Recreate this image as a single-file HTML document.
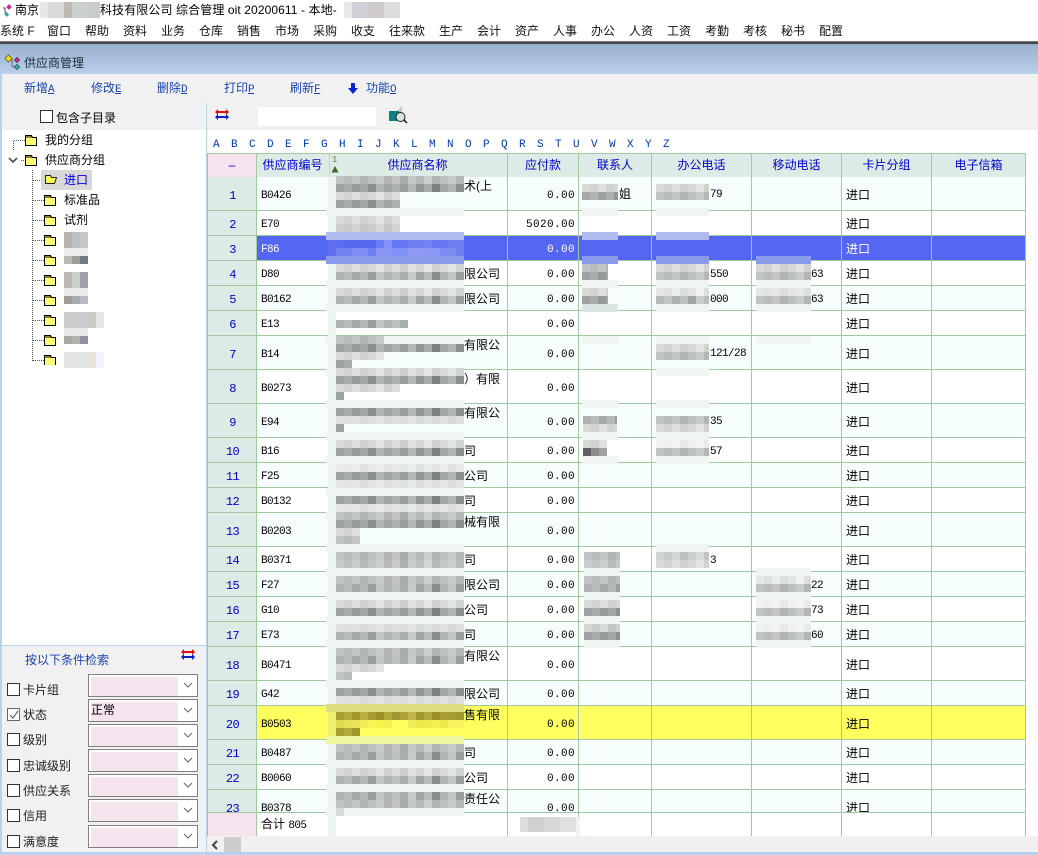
<!DOCTYPE html>
<html lang="zh"><head><meta charset="utf-8"><title>供应商管理</title>
<style>
:root{
--v:linear-gradient(90deg,#f0f2f0 0 8px,#eef0ee 0 16px,#f2f4f2 0 24px,#e8eae8 0 32px,#eef0ee 0 40px,#f4f4f4 0 48px,#e8ece8 0 56px,#f0f0f0 0 64px,#eaeeea 0 72px,#f4f6f4 0 80px,#e6eae8 0 88px,#f0f2f0 0 96px,#eaecea 0 104px,#f2f4f2 0 112px,#e6e8e6 0 120px,#eef0ee 0 128px);
--t:linear-gradient(90deg,#d8dad8 0 8px,#d2d4d2 0 16px,#dee0de 0 24px,#cfd2d0 0 32px,#d6d8d6 0 40px,#e2e4e2 0 48px,#d0d2d0 0 56px,#dcdedc 0 64px,#cdd0ce 0 72px,#e0e2e0 0 80px,#d4d6d4 0 88px,#e4e6e4 0 96px,#cfd2d0 0 104px,#dadcda 0 112px,#e2e4e2 0 120px,#d0d4d2 0 128px);
--m:linear-gradient(90deg,#c0c4c2 0 8px,#b8bcba 0 16px,#c4c6c4 0 24px,#b0b4b2 0 32px,#bcc0be 0 40px,#c8cac8 0 48px,#b4b6b4 0 56px,#c2c4c2 0 64px,#a8acaa 0 72px,#c6c8c6 0 80px,#b8bab8 0 88px,#ccd0ce 0 96px,#b0b4b2 0 104px,#c0c2c0 0 112px,#c8cac8 0 120px,#b4b8b6 0 128px);
--d:linear-gradient(90deg,#9ea2a0 0 8px,#a8acaa 0 16px,#969a98 0 24px,#a4a8a6 0 32px,#8c908e 0 40px,#b0b4b2 0 48px,#a0a4a2 0 56px,#acb0ae 0 64px,#9a9e9c 0 72px,#b4b8b6 0 80px,#929694 0 88px,#a8acaa 0 96px,#7c807e 0 104px,#a2a6a4 0 112px,#b0b4b2 0 120px,#8c908e 0 128px);
--by:linear-gradient(90deg,#a8a030 0 8px,#b4ac3c 0 16px,#a09828 0 24px,#b8b040 0 32px,#a49c30 0 40px,#988f28 0 48px,#b0a838 0 56px,#a09830 0 64px,#aca438 0 72px,#c0b848 0 80px,#a09830 0 88px,#b0a83c 0 96px,#988f28 0 104px,#a8a034 0 112px,#a49c30 0 120px,#a09830 0 128px);
--ly:linear-gradient(90deg,#e0dc50 0 8px,#e4e058 0 16px,#e8e45c 0 24px,#f0ec58 0 32px,#f8f458 0 40px,#f6f24c 0 48px,#f4f050 0 56px,#ffff60 0 72px,#f0ec58 0 80px,#ece84c 0 88px,#f0ec50 0 96px,#f4f054 0 104px,#ece84c 0 112px,#f6f260 0 128px);
--bb:linear-gradient(90deg,#5a6cf0 0 8px,#5668f0 0 40px,#6a7cf4 0 48px,#8492f8 0 56px,#6676f2 0 72px,#6e7ef2 0 88px,#7482f4 0 96px,#6676f2 0 112px,#7080f2 0 128px);
--bc:linear-gradient(90deg,#7282ee 0 16px,#7e8ef4 0 32px,#6e7eee 0 40px,#8a96f6 0 56px,#8090f4 0 72px,#8e9af4 0 88px,#8c98f6 0 104px,#7e8cf2 0 120px,#7080ee 0 128px);
}
html,body{margin:0;padding:0;background:#fff}
#p{position:relative;width:1038px;height:855px;overflow:hidden;background:#fff;font:12px/16px "Liberation Sans","Noto Sans CJK SC",sans-serif;color:#000}
#p div,#p span.a{position:absolute}
.t{white-space:nowrap;line-height:16px}
.mn{position:absolute;top:23px;white-space:nowrap;color:#111}
.tb{position:absolute;top:80px;color:#1a44b0;white-space:nowrap}
.tb u{font:11px "Liberation Mono",monospace;letter-spacing:-.6px}
.az{position:absolute;top:137px;font:11px/16px "Liberation Mono",monospace;color:#0038b0}
.r{left:207px;width:818px;border-bottom:1px solid #a3c9a3;background:#f6fffd}
.w{background:#fff}
.r>.i,.r>.k,.r>.m,.r>.g{top:0;bottom:0;display:flex;align-items:center;white-space:nowrap}
.r>.i{left:1px;width:49px;background:#dcebe5;justify-content:center;color:#0000cc;font:12px "Liberation Mono",monospace;letter-spacing:-.6px;padding-top:4px;box-sizing:border-box}
.r>.k{left:54px;font:11px "Liberation Mono",monospace;letter-spacing:-.6px;padding-top:4px;box-sizing:border-box}
.r>.m{right:450px;font:11px "Liberation Mono",monospace;letter-spacing:.4px;padding-top:4px;box-sizing:border-box}
.r>.g{left:639px;padding-top:2px;box-sizing:border-box}
.hd{top:154px;height:23px;background:#dcebe5;color:#0000cc;text-align:center;line-height:23px}
.vl{top:153px;height:683px;width:1px;background:#a3c9a3}
.s,.l{height:8px}
.s{left:326px;width:138px;background:#eff6f2}
.ss{height:8px;background:#eff6f2}
.l{left:336px;width:128px}
.V{background:var(--v)}.T{background:var(--t)}.M{background:var(--m)}.D{background:var(--d)}
.x{left:464px;white-space:nowrap;line-height:16px}
.sm{font:11px/16px "Liberation Mono",monospace;letter-spacing:-.6px;margin-top:1px}
.cb{left:7px;width:11px;height:11px;border:1px solid #333;background:#fff}
.lb{left:23px;white-space:nowrap;color:#222}
.sel{left:88px;width:108px;height:21px;border:1px solid #808080;background:#fff}
.sel>div{left:2px;top:2px;width:87px;height:19px;background:#f5e3ee}
.sel svg{position:absolute;left:94px;top:7px}
</style></head><body><div id="p">

<!-- title -->
<svg style="position:absolute;left:2px;top:4px" width="11" height="13" viewBox="0 0 11 13"><path d="M1 4h2v4l2 1" fill="none" stroke="#555"/><rect x="5" y="1" width="4" height="4" fill="#c03090" transform="rotate(45 7 3)"/><rect x="3" y="9" width="4" height="3" fill="#30a0a0" transform="rotate(45 5 10)"/></svg>
<div class="t" style="left:15px;top:2px">南京</div>
<div style="left:40px;top:2px;width:60px;height:16px;background:linear-gradient(90deg,#e6e8e6 0 8px,#d8dad8 0 24px,#c0b8b4 0 32px,#ccd0ce 0 48px,#c8cccc 0 60px)"></div>
<div class="t" style="left:100px;top:2px;letter-spacing:.1px">科技有限公司 综合管理 oit 20200611 - 本地-</div>
<div style="left:344px;top:2px;width:56px;height:16px;background:linear-gradient(90deg,#e8e8ea 0 8px,#d0d0d8 0 24px,#d0cccc 0 40px,#dcdcdc 0 56px)"></div>

<span class="mn" style="left:0">系统 F</span><span class="mn" style="left:47px">窗口</span><span class="mn" style="left:85px">帮助</span><span class="mn" style="left:123px">资料</span><span class="mn" style="left:161px">业务</span><span class="mn" style="left:199px">仓库</span><span class="mn" style="left:237px">销售</span><span class="mn" style="left:275px">市场</span><span class="mn" style="left:313px">采购</span><span class="mn" style="left:351px">收支</span><span class="mn" style="left:389px">往来款</span><span class="mn" style="left:439px">生产</span><span class="mn" style="left:477px">会计</span><span class="mn" style="left:515px">资产</span><span class="mn" style="left:553px">人事</span><span class="mn" style="left:591px">办公</span><span class="mn" style="left:629px">人资</span><span class="mn" style="left:667px">工资</span><span class="mn" style="left:705px">考勤</span><span class="mn" style="left:743px">考核</span><span class="mn" style="left:781px">秘书</span><span class="mn" style="left:819px">配置</span>

<div style="left:0;top:41px;width:1038px;height:3px;background:linear-gradient(#999,#333 60%,#555)"></div>
<div style="left:0;top:44px;width:1038px;height:30px;background:linear-gradient(#98b0cc,#b9d0ea)"></div>
<svg style="position:absolute;left:4px;top:54px" width="17" height="17" viewBox="0 0 17 17"><path d="M6 5l2 1v6l3 1" fill="none" stroke="#666"/><rect x="2" y="2" width="5" height="5" fill="#f2e000" stroke="#333" stroke-width=".6" transform="rotate(45 4.5 4.5)"/><rect x="11" y="4" width="4" height="4" fill="#c03090" stroke="#333" stroke-width=".5" transform="rotate(45 13 6)"/><rect x="11" y="11" width="4" height="4" fill="#30a8a8" stroke="#333" stroke-width=".5" transform="rotate(45 13 13)"/></svg>
<div class="t" style="left:24px;top:55px;color:#1c2b3c">供应商管理</div>

<!-- toolbar area -->
<div style="left:0;top:74px;width:1038px;height:56px;background:#f1f1f1"></div>
<div style="left:0;top:74px;width:2px;height:781px;background:#b8d2ee"></div>
<div style="left:206px;top:103px;width:1px;height:749px;background:#b8d2ee"></div>
<span class="tb" style="left:24px">新增<u>A</u></span><span class="tb" style="left:91px">修改<u>E</u></span><span class="tb" style="left:157px">删除<u>D</u></span><span class="tb" style="left:224px">打印<u>P</u></span><span class="tb" style="left:290px">刷新<u>F</u></span>
<svg style="position:absolute;left:348px;top:83px" width="10" height="11" viewBox="0 0 10 11"><path d="M3 0h4v5h3l-5 6-5-6h3z" fill="#0a20d8"/></svg>
<span class="tb" style="left:366px">功能<u>O</u></span>

<div style="left:40px;top:110px;width:11px;height:11px;border:1px solid #333;background:#fff"></div>
<div class="t" style="left:56px;top:110px">包含子目录</div>

<svg style="position:absolute;left:215px;top:109px" width="14" height="12" viewBox="0 0 14 12"><path d="M2 3h10" stroke="#e01010" stroke-width="2"/><path d="M3 0v6L0 3zM11 0v6l3-3z" fill="#e01010"/><path d="M2 8h10" stroke="#1020c0" stroke-width="2"/><path d="M3 5v6L0 8zM11 5v6l3-3z" fill="#1020c0"/></svg>
<div style="left:258px;top:107px;width:118px;height:19px;background:#fff"></div>
<svg style="position:absolute;left:389px;top:106px" width="19" height="20" viewBox="0 0 19 20"><path d="M8 5l5-5v8z" fill="#c4c4c4"/><rect x="0" y="5" width="10" height="10" fill="#0d8080"/><circle cx="11.500" cy="11" r="4.500" fill="#d8e4e4" stroke="#222"/><path d="M15 14l3 3" stroke="#111" stroke-width="1.500"/></svg>

<!-- tree -->
<div style="left:2px;top:130px;width:204px;height:515px;background:#fff"></div>
<svg style="position:absolute;left:0;top:130px" width="110" height="235" viewBox="0 0 110 235">
<defs><g id="f"><path d="M.5 11.500V1.500h6l1 2h4v8z" fill="#ffff70" stroke="#000"/><path d="M1 3h6" stroke="#000"/></g></defs>
<g stroke="#555" stroke-dasharray="1 1" fill="none"><path d="M13.500 20V10M14 10.500h11M21 30.500h4M32.500 40v191M33 50.500h11M33 70.500h11M33 90.500h11M33 110.500h11M33 130.500h11M33 150.500h11M33 170.500h11M33 190.500h11M33 210.500h11M33 230.500h11"/></g>
<path d="M9 28l4 4 4-4" fill="none" stroke="#555" stroke-width="1.800"/>
<rect x="41" y="40" width="51" height="20" fill="#d8d8d8"/>
<use href="#f" x="25" y="4"/><use href="#f" x="25" y="24"/>
<path d="M45.500 45.500h5l1 2h5l-2 6h-9z" fill="#ffff50" stroke="#222"/>
<use href="#f" x="44" y="64"/><use href="#f" x="44" y="84"/><use href="#f" x="44" y="104"/><use href="#f" x="44" y="124"/><use href="#f" x="44" y="144"/><use href="#f" x="44" y="164"/><use href="#f" x="44" y="184"/><use href="#f" x="44" y="204"/><use href="#f" x="44" y="224"/>
</svg>
<div class="t" style="left:45px;top:132px">我的分组</div>
<div class="t" style="left:45px;top:152px">供应商分组</div>
<div class="t" style="left:64px;top:172px;color:#0000e0">进口</div>
<div class="t" style="left:64px;top:192px">标准品</div>
<div class="t" style="left:64px;top:212px">试剂</div>
<div style="left:64px;top:232px;width:24px;height:16px;background:linear-gradient(90deg,#bab4ae 0 8px,#bcc0c4 0 16px,#c8c8c8 0 24px)"></div>
<div style="left:64px;top:248px;width:24px;height:8px;background:#ececec"></div>
<div style="left:64px;top:256px;width:24px;height:8px;background:linear-gradient(90deg,#bcbab6 0 8px,#9c9c9a 0 16px,#747880 0 24px)"></div>
<div style="left:64px;top:272px;width:24px;height:16px;background:linear-gradient(90deg,#bcb8b8 0 8px,#ccd0ca 0 16px,#a0a0a8 0 24px)"></div>
<div style="left:64px;top:288px;width:24px;height:8px;background:#eaeaea"></div>
<div style="left:64px;top:296px;width:24px;height:8px;background:linear-gradient(90deg,#a09c98 0 8px,#a8acb0 0 16px,#bcbcc0 0 24px)"></div>
<div style="left:64px;top:312px;width:40px;height:16px;background:linear-gradient(90deg,#ccc 0 24px,#ccc8c4 0 32px,#e4e6ea 0 40px)"></div>
<div style="left:64px;top:328px;width:24px;height:8px;background:#e8e8e8"></div>
<div style="left:64px;top:336px;width:24px;height:8px;background:linear-gradient(90deg,#a8a8a4 0 8px,#b0b4ae 0 16px,#9090a0 0 24px)"></div>
<div style="left:64px;top:352px;width:40px;height:16px;background:linear-gradient(90deg,#e4e4e4 0 24px,#e8e4dc 0 32px,#f2f6fc 0 40px)"></div>

<!-- search panel -->
<div style="left:2px;top:645px;width:204px;height:1px;background:#b8d2ee"></div>
<div style="left:2px;top:646px;width:204px;height:206px;background:#f1f1f1"></div>
<div class="t" style="left:25px;top:652px;color:#1a44b0">按以下条件检索</div>
<svg style="position:absolute;left:181px;top:649px" width="14" height="12" viewBox="0 0 14 12"><path d="M2 3h10" stroke="#e01010" stroke-width="2"/><path d="M3 0v6L0 3zM11 0v6l3-3z" fill="#e01010"/><path d="M2 8h10" stroke="#1020c0" stroke-width="2"/><path d="M3 5v6L0 8zM11 5v6l3-3z" fill="#1020c0"/></svg>
<div class="cb" style="top:683px"></div><div class="lb" style="top:682px">卡片组</div>
<div class="cb" style="top:708px;border-color:#666"></div><svg style="position:absolute;left:9px;top:710px" width="10" height="10" viewBox="0 0 10 10"><path d="M1 5l3 3 5-7" fill="none" stroke="#666" stroke-width="1.200"/></svg><div class="lb" style="top:707px">状态</div>
<div class="cb" style="top:733px"></div><div class="lb" style="top:732px">级别</div>
<div class="cb" style="top:759px"></div><div class="lb" style="top:758px">忠诚级别</div>
<div class="cb" style="top:784px"></div><div class="lb" style="top:783px">供应关系</div>
<div class="cb" style="top:809px"></div><div class="lb" style="top:808px">信用</div>
<div class="cb" style="top:835px"></div><div class="lb" style="top:834px">满意度</div>

<div class="sel" style="top:674px"><div></div><svg width="10" height="6" viewBox="0 0 10 6"><path d="M1 1l4 4 4-4" fill="none" stroke="#666"/></svg></div>
<div class="sel" style="top:699px"><div></div><svg width="10" height="6" viewBox="0 0 10 6"><path d="M1 1l4 4 4-4" fill="none" stroke="#666"/></svg></div>
<div class="t" style="left:91px;top:702px">正常</div>
<div class="sel" style="top:724px"><div></div><svg width="10" height="6" viewBox="0 0 10 6"><path d="M1 1l4 4 4-4" fill="none" stroke="#666"/></svg></div>
<div class="sel" style="top:749px"><div></div><svg width="10" height="6" viewBox="0 0 10 6"><path d="M1 1l4 4 4-4" fill="none" stroke="#666"/></svg></div>
<div class="sel" style="top:774px"><div></div><svg width="10" height="6" viewBox="0 0 10 6"><path d="M1 1l4 4 4-4" fill="none" stroke="#666"/></svg></div>
<div class="sel" style="top:799px"><div></div><svg width="10" height="6" viewBox="0 0 10 6"><path d="M1 1l4 4 4-4" fill="none" stroke="#666"/></svg></div>
<div class="sel" style="top:825px"><div></div><svg width="10" height="6" viewBox="0 0 10 6"><path d="M1 1l4 4 4-4" fill="none" stroke="#666"/></svg></div>

<!-- alphabet -->
<span class="az" style="left:213px">A</span><span class="az" style="left:231px">B</span><span class="az" style="left:249px">C</span><span class="az" style="left:267px">D</span><span class="az" style="left:285px">E</span><span class="az" style="left:303px">F</span><span class="az" style="left:321px">G</span><span class="az" style="left:339px">H</span><span class="az" style="left:357px">I</span><span class="az" style="left:375px">J</span><span class="az" style="left:393px">K</span><span class="az" style="left:411px">L</span><span class="az" style="left:429px">M</span><span class="az" style="left:447px">N</span><span class="az" style="left:465px">O</span><span class="az" style="left:483px">P</span><span class="az" style="left:501px">Q</span><span class="az" style="left:519px">R</span><span class="az" style="left:537px">S</span><span class="az" style="left:555px">T</span><span class="az" style="left:573px">U</span><span class="az" style="left:591px">V</span><span class="az" style="left:609px">W</span><span class="az" style="left:627px">X</span><span class="az" style="left:645px">Y</span><span class="az" style="left:663px">Z</span>

<!-- grid header -->
<div style="left:207px;top:153px;width:819px;height:1px;background:#a3c9a3"></div>
<div class="hd" style="left:208px;width:48px;background:#f5e3ee">–</div>
<div class="hd" style="left:257px;width:71px">供应商编号</div>
<div class="hd" style="left:328px;width:179px">供应商名称</div>
<div class="hd" style="left:508px;width:70px">应付款</div>
<div class="hd" style="left:579px;width:72px">联系人</div>
<div class="hd" style="left:652px;width:99px">办公电话</div>
<div class="hd" style="left:752px;width:89px">移动电话</div>
<div class="hd" style="left:842px;width:89px">卡片分组</div>
<div class="hd" style="left:932px;width:93px">电子信箱</div>
<div style="left:329px;top:154px;width:1px;height:23px;background:#c5d8c5"></div>
<div style="left:332px;top:155px;font:9px/10px 'Liberation Mono',monospace;color:#8a7a20">1</div>
<svg style="position:absolute;left:331px;top:166px" width="8" height="7" viewBox="0 0 8 7"><path d="M4 0l3.500 6.500H.5z" fill="#3d6a2a"/></svg>

<!-- rows -->
<div class="r" style="top:177px;height:33px"><div class="i">1</div><div class="k">B0426</div><div class="m">0.00</div><div class="g">进口</div></div>
<div class="r w" style="top:211px;height:24px"><div class="i">2</div><div class="k">E70</div><div class="m">5020.00</div><div class="g">进口</div></div>
<div class="r" style="top:236px;height:24px;background:#5566f2;color:#fff"><div class="i">3</div><div class="k">F86</div><div class="m">0.00</div><div class="g">进口</div></div>
<div class="r w" style="top:261px;height:24px"><div class="i">4</div><div class="k">D80</div><div class="m">0.00</div><div class="g">进口</div></div>
<div class="r" style="top:286px;height:24px"><div class="i">5</div><div class="k">B0162</div><div class="m">0.00</div><div class="g">进口</div></div>
<div class="r w" style="top:311px;height:24px"><div class="i">6</div><div class="k">E13</div><div class="m">0.00</div><div class="g">进口</div></div>
<div class="r" style="top:336px;height:33px"><div class="i">7</div><div class="k">B14</div><div class="m">0.00</div><div class="g">进口</div></div>
<div class="r w" style="top:370px;height:33px"><div class="i">8</div><div class="k">B0273</div><div class="m">0.00</div><div class="g">进口</div></div>
<div class="r" style="top:404px;height:33px"><div class="i">9</div><div class="k">E94</div><div class="m">0.00</div><div class="g">进口</div></div>
<div class="r w" style="top:438px;height:24px"><div class="i">10</div><div class="k">B16</div><div class="m">0.00</div><div class="g">进口</div></div>
<div class="r" style="top:463px;height:24px"><div class="i">11</div><div class="k">F25</div><div class="m">0.00</div><div class="g">进口</div></div>
<div class="r w" style="top:488px;height:24px"><div class="i">12</div><div class="k">B0132</div><div class="m">0.00</div><div class="g">进口</div></div>
<div class="r" style="top:513px;height:33px"><div class="i">13</div><div class="k">B0203</div><div class="m">0.00</div><div class="g">进口</div></div>
<div class="r w" style="top:547px;height:24px"><div class="i">14</div><div class="k">B0371</div><div class="m">0.00</div><div class="g">进口</div></div>
<div class="r" style="top:572px;height:24px"><div class="i">15</div><div class="k">F27</div><div class="m">0.00</div><div class="g">进口</div></div>
<div class="r w" style="top:597px;height:24px"><div class="i">16</div><div class="k">G10</div><div class="m">0.00</div><div class="g">进口</div></div>
<div class="r" style="top:622px;height:24px"><div class="i">17</div><div class="k">E73</div><div class="m">0.00</div><div class="g">进口</div></div>
<div class="r w" style="top:647px;height:33px"><div class="i">18</div><div class="k">B0471</div><div class="m">0.00</div><div class="g">进口</div></div>
<div class="r" style="top:681px;height:24px"><div class="i">19</div><div class="k">G42</div><div class="m">0.00</div><div class="g">进口</div></div>
<div class="r" style="top:706px;height:33px;background:#ffff60"><div class="i">20</div><div class="k">B0503</div><div class="m">0.00</div><div class="g">进口</div></div>
<div class="r" style="top:740px;height:24px"><div class="i">21</div><div class="k">B0487</div><div class="m">0.00</div><div class="g">进口</div></div>
<div class="r w" style="top:765px;height:24px"><div class="i">22</div><div class="k">B0060</div><div class="m">0.00</div><div class="g">进口</div></div>
<div class="r" style="top:790px;height:33px"><div class="i">23</div><div class="k">B0378</div><div class="m">0.00</div><div class="g">进口</div></div>

<!-- footer -->
<div style="left:207px;top:812px;width:819px;height:1px;background:#a3c9a3"></div>
<div style="left:208px;top:813px;width:818px;height:23px;background:#fff"></div>
<div style="left:208px;top:813px;width:48px;height:23px;background:#f5e3ee"></div>
<div class="t" style="left:261px;top:816px">合计 <span style="font:11px 'Liberation Mono',monospace;letter-spacing:-.6px">805</span></div>

<!-- vertical lines -->
<div class="vl" style="left:207px"></div><div class="vl" style="left:256px"></div><div class="vl" style="left:507px"></div><div class="vl" style="left:578px"></div><div class="vl" style="left:651px"></div><div class="vl" style="left:751px"></div><div class="vl" style="left:841px"></div><div class="vl" style="left:931px"></div><div class="vl" style="left:1025px"></div>

<!-- name col strips -->
<div style="left:328px;top:177px;width:8px;height:659px;background:#eef5f0"></div>
<div class="s" style="top:208px"></div>
<div class="s" style="top:232px;background:#b1bcee"></div>
<div class="s" style="top:256px;background:#8a9aea"></div>
<div class="s" style="top:280px"></div><div class="s" style="top:304px"></div><div class="s" style="top:336px"></div><div class="s" style="top:368px"></div><div class="s" style="top:400px"></div><div class="s" style="top:432px"></div><div class="s" style="top:456px"></div><div class="s" style="top:488px"></div><div class="s" style="top:512px"></div><div class="s" style="top:544px"></div><div class="s" style="top:568px"></div><div class="s" style="top:592px"></div><div class="s" style="top:616px"></div><div class="s" style="top:640px"></div><div class="s" style="top:680px"></div>
<div class="s" style="top:704px;background:#dede80"></div><div class="s" style="top:736px;background:#eef6a0"></div>
<div class="s" style="top:760px"></div><div class="s" style="top:784px"></div><div class="s" style="top:808px"></div>
<div style="left:328px;top:240px;width:8px;height:16px;background:#6070ee"></div>
<div style="left:328px;top:712px;width:8px;height:24px;background:#eeee70"></div>

<!-- name mosaics -->
<div class="l M" style="top:176px"></div><div class="l D" style="top:184px"></div><div class="l T" style="top:192px;width:64px"></div><div class="l D" style="top:200px;width:64px"></div>
<div class="l T" style="top:216px;width:64px"></div><div class="l T" style="top:224px;width:64px;filter:brightness(.95)"></div>
<div class="l" style="top:240px;background:var(--bb)"></div><div class="l" style="top:248px;background:var(--bc)"></div>
<div class="l T" style="top:264px"></div><div class="l D" style="top:272px;filter:brightness(1.1)"></div>
<div class="l T" style="top:288px"></div><div class="l D" style="top:296px;filter:brightness(1.1)"></div>
<div class="l D" style="top:320px;width:72px;filter:brightness(1.1)"></div>
<div class="l M" style="top:336px;width:48px"></div><div class="l D" style="top:344px"></div><div class="l T" style="top:352px;width:48px"></div><div class="l D" style="top:360px;width:16px"></div>
<div class="l T" style="top:368px"></div><div class="l D" style="top:376px"></div><div class="l T" style="top:384px;width:64px"></div><div class="l D" style="top:392px;width:8px"></div>
<div class="l D" style="top:408px"></div><div class="l V" style="top:416px;filter:brightness(.93)"></div><div class="l D" style="top:424px;width:8px"></div>
<div class="l T" style="top:440px"></div><div class="l D" style="top:448px"></div>
<div class="l V" style="top:464px;filter:brightness(.97)"></div><div class="l D" style="top:472px"></div><div class="l V" style="top:480px;filter:brightness(.95)"></div>
<div class="l D" style="top:496px"></div><div class="l V" style="top:504px;filter:brightness(.95)"></div>
<div class="l M" style="top:512px"></div><div class="l D" style="top:520px"></div><div class="l T" style="top:528px;width:24px"></div><div class="l M" style="top:536px;width:24px"></div>
<div class="l M" style="top:552px"></div><div class="l M" style="top:560px;filter:brightness(1.03)"></div>
<div class="l M" style="top:576px"></div><div class="l D" style="top:584px;filter:brightness(1.1)"></div>
<div class="l T" style="top:600px"></div><div class="l D" style="top:608px"></div>
<div class="l V" style="top:624px;filter:brightness(.93)"></div><div class="l D" style="top:632px;filter:brightness(1.1)"></div>
<div class="l M" style="top:648px"></div><div class="l D" style="top:656px;filter:brightness(1.1)"></div><div class="l T" style="top:664px;width:48px"></div><div class="l M" style="top:672px;width:16px"></div>
<div class="l D" style="top:688px"></div><div class="l V" style="top:696px;filter:brightness(.93)"></div>
<div class="l" style="top:712px;background:var(--by)"></div><div class="l" style="top:720px;background:var(--ly)"></div><div class="l" style="top:728px;width:24px;background:var(--by)"></div>
<div class="l M" style="top:744px"></div><div class="l D" style="top:752px;filter:brightness(1.1)"></div>
<div class="l T" style="top:768px"></div><div class="l D" style="top:776px;filter:brightness(1.1)"></div>
<div class="l D" style="top:792px;filter:brightness(1.1)"></div><div class="l M" style="top:800px"></div><div class="l T" style="top:808px;width:8px"></div>

<!-- name suffixes -->
<div class="x" style="top:178px">术(上</div><div class="x" style="top:266px">限公司</div><div class="x" style="top:291px">限公司</div><div class="x" style="top:337px">有限公</div><div class="x" style="top:371px">）有限</div><div class="x" style="top:405px">有限公</div><div class="x" style="top:443px">司</div><div class="x" style="top:468px">公司</div><div class="x" style="top:493px">司</div><div class="x" style="top:514px">械有限</div><div class="x" style="top:552px">司</div><div class="x" style="top:577px">限公司</div><div class="x" style="top:602px">公司</div><div class="x" style="top:627px">司</div><div class="x" style="top:648px">有限公</div><div class="x" style="top:686px">限公司</div><div class="x" style="top:707px">售有限</div><div class="x" style="top:745px">司</div><div class="x" style="top:770px">公司</div><div class="x" style="top:791px">责任公</div>

<!-- contact strips/mosaics -->
<div class="ss" style="left:582px;top:208px;width:36px"></div>
<div class="ss" style="left:582px;top:232px;width:36px;background:#b1bcee"></div>
<div class="ss" style="left:582px;top:256px;width:36px;background:#8a9aea"></div>
<div class="ss" style="left:582px;top:280px;width:36px"></div><div class="ss" style="left:582px;top:304px;width:36px;background:#dbe6e2"></div><div class="ss" style="left:582px;top:336px;width:36px"></div><div class="ss" style="left:582px;top:400px;width:36px"></div><div class="ss" style="left:582px;top:432px;width:36px"></div><div class="ss" style="left:582px;top:456px;width:36px"></div><div class="ss" style="left:584px;top:568px;width:36px"></div><div class="ss" style="left:584px;top:592px;width:36px"></div><div class="ss" style="left:584px;top:616px;width:36px"></div><div class="ss" style="left:584px;top:640px;width:36px"></div>
<div class="l T" style="left:582px;top:184px;width:36px"></div><div class="l D" style="left:582px;top:192px;width:36px;filter:brightness(1.05)"></div>
<div class="l M" style="left:582px;top:264px;width:26px"></div><div class="l D" style="left:582px;top:272px;width:26px"></div>
<div class="l T" style="left:582px;top:288px;width:26px"></div><div class="l D" style="left:582px;top:296px;width:26px"></div>
<div class="l D" style="left:583px;top:416px;width:34px;filter:brightness(1.1)"></div><div class="l T" style="left:583px;top:424px;width:34px"></div>
<div class="l T" style="left:583px;top:440px;width:24px"></div><div class="l" style="left:583px;top:448px;width:24px;background:linear-gradient(90deg,#606060 0 8px,#8c8c8c 0 16px,#a0a0a0 0 24px)"></div>
<div class="l M" style="left:584px;top:552px;width:36px"></div><div class="l M" style="left:584px;top:560px;width:36px;filter:brightness(1.05)"></div>
<div class="l M" style="left:584px;top:576px;width:36px"></div><div class="l D" style="left:584px;top:584px;width:36px;filter:brightness(1.1)"></div>
<div class="l T" style="left:584px;top:600px;width:36px"></div><div class="l D" style="left:584px;top:608px;width:36px"></div>
<div class="l M" style="left:584px;top:624px;width:36px;filter:brightness(1.1)"></div><div class="l D" style="left:584px;top:632px;width:36px"></div>
<div class="x" style="left:619px;top:186px">姐</div>

<!-- office -->
<div class="ss" style="left:656px;top:208px;width:53px"></div>
<div class="ss" style="left:656px;top:232px;width:53px;background:#b1bcee"></div>
<div class="ss" style="left:656px;top:256px;width:53px;background:#8a9aea"></div>
<div class="ss" style="left:656px;top:280px;width:53px"></div><div class="ss" style="left:656px;top:304px;width:53px"></div><div class="ss" style="left:656px;top:336px;width:53px"></div><div class="ss" style="left:656px;top:368px;width:53px"></div><div class="ss" style="left:656px;top:400px;width:53px"></div><div class="ss" style="left:656px;top:432px;width:53px"></div><div class="ss" style="left:656px;top:456px;width:53px"></div><div class="ss" style="left:656px;top:544px;width:53px"></div>
<div class="l T" style="left:656px;top:184px;width:53px"></div><div class="l M" style="left:656px;top:192px;width:53px"></div>
<div class="l T" style="left:656px;top:264px;width:53px"></div><div class="l M" style="left:656px;top:272px;width:53px"></div>
<div class="l T" style="left:656px;top:288px;width:53px;filter:brightness(1.06)"></div><div class="l D" style="left:656px;top:296px;width:53px;filter:brightness(1.15)"></div>
<div class="l T" style="left:656px;top:344px;width:53px"></div><div class="l M" style="left:656px;top:352px;width:53px"></div>
<div class="l M" style="left:656px;top:416px;width:53px"></div><div class="l T" style="left:656px;top:424px;width:53px"></div>
<div class="l V" style="left:656px;top:440px;width:53px"></div><div class="l M" style="left:656px;top:448px;width:53px"></div>
<div class="l M" style="left:656px;top:552px;width:53px;filter:brightness(1.08)"></div><div class="l T" style="left:656px;top:560px;width:53px"></div>
<div class="x sm" style="left:710px;top:186px">79</div><div class="x sm" style="left:710px;top:266px">550</div><div class="x sm" style="left:710px;top:291px">000</div><div class="x sm" style="left:710px;top:345px">121/28</div><div class="x sm" style="left:710px;top:413px">35</div><div class="x sm" style="left:710px;top:443px">57</div><div class="x sm" style="left:710px;top:552px">3</div>

<!-- mobile -->
<div class="ss" style="left:756px;top:256px;width:55px;background:#8a9aea"></div>
<div class="ss" style="left:756px;top:280px;width:55px"></div><div class="ss" style="left:756px;top:304px;width:55px"></div><div class="ss" style="left:756px;top:336px;width:55px"></div><div class="ss" style="left:756px;top:568px;width:55px"></div><div class="ss" style="left:756px;top:592px;width:55px"></div><div class="ss" style="left:756px;top:616px;width:55px"></div><div class="ss" style="left:756px;top:640px;width:55px"></div>
<div class="l T" style="left:756px;top:264px;width:55px"></div><div class="l M" style="left:756px;top:272px;width:55px"></div>
<div class="l V" style="left:756px;top:288px;width:55px;filter:brightness(.95)"></div><div class="l M" style="left:756px;top:296px;width:55px"></div>
<div class="l T" style="left:756px;top:576px;width:55px;filter:brightness(1.06)"></div><div class="l M" style="left:756px;top:584px;width:55px"></div>
<div class="l V" style="left:756px;top:600px;width:55px"></div><div class="l M" style="left:756px;top:608px;width:55px"></div>
<div class="l V" style="left:756px;top:624px;width:55px"></div><div class="l M" style="left:756px;top:632px;width:55px"></div>
<div class="x sm" style="left:811px;top:266px">63</div><div class="x sm" style="left:811px;top:291px">63</div><div class="x sm" style="left:811px;top:577px">22</div><div class="x sm" style="left:811px;top:602px">73</div><div class="x sm" style="left:811px;top:627px">60</div>

<!-- footer total blur -->
<div style="left:520px;top:817px;width:56px;height:15px;background:linear-gradient(90deg,#dcdcdc 0 8px,#d0d0d0 0 24px,#d8d8d8 0 40px,#e0e0e0 0 56px)"></div>
<div style="left:576px;top:817px;width:4px;height:19px;background:#eef5f0"></div>

<!-- scrollbar -->
<div style="left:207px;top:836px;width:831px;height:16px;background:#f0f0f0"></div>
<svg style="position:absolute;left:211px;top:840px" width="8" height="10" viewBox="0 0 8 10"><path d="M6 1L2 5l4 4" fill="none" stroke="#444" stroke-width="2"/></svg>
<div style="left:224px;top:837px;width:17px;height:15px;background:#cdcdcd"></div>
<div style="left:0;top:852px;width:1038px;height:3px;background:#b8d2ee"></div>
</div></body></html>
